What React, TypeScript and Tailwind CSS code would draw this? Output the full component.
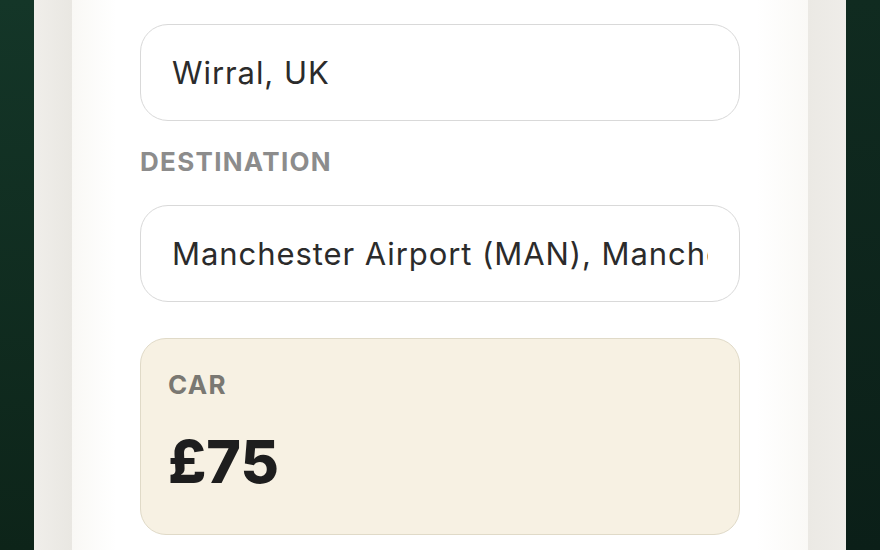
import React from "react";

export default function App() {
  return (
    <div className="flex h-[550px] w-[880px] overflow-hidden bg-[#10291f]" style={{ fontFamily: "Inter, 'Noto Sans', sans-serif" }}>
      <div className="w-[34px] shrink-0 bg-[linear-gradient(to_bottom,#143628,#0d2419)]" />
      <div className="w-[38px] shrink-0 bg-[linear-gradient(to_right,#f0eeea,#e9e7e2)]" />
      <div className="flex-1 bg-[linear-gradient(to_right,#f9f8f5,#ffffff_6%,#ffffff_93%,#faf9f6)] px-[68px] pt-[24px]">
        <input
          readOnly
          value="Wirral, UK"
          className="block h-[97px] w-full rounded-[28px] border-[1.5px] border-[#d9d9d9] bg-white px-[31px] text-[31px] tracking-[0.03em] text-[#2b2b2b] outline-none"
        />
        <div className="mt-[25px] mb-[27px] h-[32px] text-[26px] leading-[32px] font-bold tracking-[0.05em] text-[#8c8c8c]">
          DESTINATION
        </div>
        <input
          readOnly
          value="Manchester Airport (MAN), Manchester, UK"
          className="block h-[97px] w-full rounded-[28px] border-[1.5px] border-[#d9d9d9] bg-white px-[31px] text-[31px] tracking-[0.03em] text-[#2b2b2b] outline-none"
        />
        <div className="mt-[36px] h-[197px] rounded-[26px] border-[1.5px] border-[#e0dac8] bg-[#f7f1e3] px-[27px] pt-[30px]">
          <div className="h-[32px] text-[26px] leading-[32px] font-bold tracking-[0.05em] text-[#7a7872]">CAR</div>
          <div className="mt-[31px] text-[59px] leading-[59px] font-extrabold text-[#1e1e1e]">£75</div>
        </div>
      </div>
      <div className="w-[38px] shrink-0 bg-[linear-gradient(to_right,#ebe9e4,#efede9)]" />
      <div className="w-[34px] shrink-0 bg-[linear-gradient(to_bottom,#102b20,#0b1f18)]" />
    </div>
  );
}
